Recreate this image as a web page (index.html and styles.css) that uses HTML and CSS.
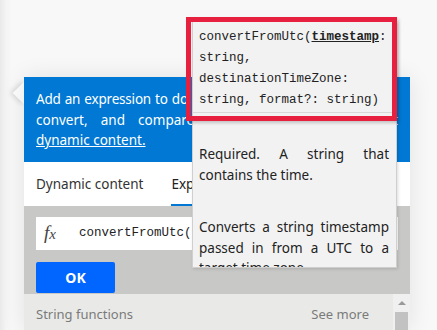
FILE: index.html
```html
<!DOCTYPE html>
<html>
<head>
<meta charset="utf-8">
<link rel="stylesheet" href="styles.css">
</head>
<body>
<div class="stage">
  <div class="pointer"></div>
  <div class="panel">
    <div class="intro">
      <div class="spaced">Add an expression to do basic things like access,</div>
      <div class="jl">convert, and compare values. Learn more about</div>
      <div><a class="link">dynamic content.</a></div>
    </div>
    <div class="tabs">
      <span class="tab">Dynamic content</span>
      <span class="tab active">Expression</span>
    </div>
    <div class="editor">
      <div class="input">
        <span class="fx">f<span class="x">x</span></span>
        <span class="code">convertFromUtc(</span><span class="caret"></span>
      </div>
      <button class="ok">OK</button>
    </div>
    <div class="list">
      <div class="list-head">
        <span class="group">String functions</span>
        <span class="more">See more</span>
      </div>
      <div class="scrollbar">
        <div class="up"></div>
        <div class="thumb"></div>
      </div>
    </div>
  </div>

  <div class="tooltip">
    <div class="sig">convertFromUtc(<b>timestamp</b>:<br>string,<br>destinationTimeZone:<br>string, format?: string)</div>
    <div class="desc">
      <p><span class="jl">Required. A string that</span><span>contains the time.</span></p>
      <p><span class="jl">Converts a string timestamp</span><span class="jl">passed in from a UTC to a</span><span>target time zone.</span></p>
    </div>
  </div>
  <div class="highlight"></div>
</div>
</body>
</html>
```
FILE: styles.css
```css
html, body {
  margin: 0;
  padding: 0;
}
body {
  width: 437px;
  height: 330px;
  overflow: hidden;
  background: linear-gradient(to right, #e9e9e9 0, #f4f4f4 6px, #f8f8f8 12px, #f8f8f8 100%);
  font-family: "Noto Sans", "Open Sans", sans-serif;
}
.stage {
  position: relative;
  height: 330px;
  overflow: hidden;
  padding: 77px 0 0 24px;
  box-sizing: border-box;
}
.pointer {
  position: absolute;
  left: 16px;
  top: 85px;
  width: 16px;
  height: 16px;
  background: #fdfdfd;
  transform: rotate(45deg);
  box-shadow: -2px 2px 5px rgba(0,0,0,0.12);
}
.panel {
  position: relative;
  width: 386px;
  height: 253px;
  display: flex;
  flex-direction: column;
  box-shadow: 0 0 22px rgba(0,0,0,0.09);
}
.intro {
  background: #0078d4;
  color: #fff;
  font-size: 13.5px;
  line-height: 20.5px;
  padding: 12px 12px 11px 12px;
}
.spaced {
  white-space: nowrap;
  letter-spacing: -0.2px;
  word-spacing: 0.8px;
}
.jl {
  display: block;
  text-align: justify;
  text-align-last: justify;
}
.link {
  text-decoration: underline;
}
.tabs {
  background: #fff;
  height: 44px;
  flex: none;
  display: flex;
  align-items: center;
  padding-left: 12px;
  gap: 28px;
  font-size: 13.5px;
  color: #333;
}
.tab {
  line-height: 44px;
  height: 44px;
  box-sizing: border-box;
}
.tab.active {
  color: #222;
  border-bottom: 2px solid #0078d4;
}
.editor {
  background: #c8c9c6;
  padding: 11px 12px 1px 12px;
  display: flex;
  flex-direction: column;
  align-items: flex-start;
  gap: 12px;
}
.input {
  background: #fff;
  width: 362px;
  height: 33px;
  display: flex;
  align-items: center;
  box-sizing: border-box;
  padding-left: 8px;
}
.fx {
  font-family: "Liberation Serif", serif;
  font-style: italic;
  font-size: 19px;
  color: #444;
  width: 35px;
}
.fx .x {
  font-size: 15px;
}
.code {
  font-family: "Liberation Mono", monospace;
  font-size: 12.5px;
  color: #222;
}
.caret {
  display: inline-block;
  width: 1px;
  height: 17px;
  background: #000;
}
.ok {
  width: 79px;
  height: 31px;
  border: 0;
  border-radius: 2px;
  background: #0066ff;
  color: #fff;
  font-family: "Noto Sans", sans-serif;
  font-weight: bold;
  font-size: 14px;
  padding: 0;
}
.list {
  flex: 1;
  background: #e9eae8;
  display: flex;
  position: relative;
}
.list-head {
  flex: 1;
  display: flex;
  justify-content: space-between;
  padding: 11px 24px 0 12px;
  font-size: 13px;
  color: #7a7a7a;
  height: 21px;
}
.scrollbar {
  width: 17px;
  background: #f0f0f0;
  display: flex;
  flex-direction: column;
  align-items: center;
}
.up {
  width: 0;
  height: 0;
  border-left: 4px solid transparent;
  border-right: 4px solid transparent;
  border-bottom: 4px solid #9a9a9a;
  margin-top: 7px;
}
.thumb {
  width: 13px;
  flex: 1;
  margin-top: 7px;
  background: #c2c2c2;
}
.tooltip {
  position: absolute;
  left: 192px;
  top: 22px;
  width: 205px;
  height: 246px;
  box-sizing: border-box;
  background: #f2f2f2;
  border: 1px solid #cfcfcf;
  border-top: 0;
  box-shadow: 1px 1px 3px rgba(0,0,0,0.15);
  overflow: hidden;
  z-index: 2;
}
.sig {
  font-family: "Liberation Mono", monospace;
  font-size: 12.5px;
  line-height: 21px;
  color: #222;
  padding: 5px 6px 1px 6px;
  border-bottom: 1px solid #d8d8d8;
}
.sig b {
  text-decoration: underline;
}
.desc {
  padding: 31px 7px 0 6px;
  font-size: 13.5px;
  line-height: 20.5px;
  color: #222;
}
.desc p {
  margin: 0 0 32px 0;
}
.desc span {
  display: block;
}
.highlight {
  position: absolute;
  left: 186px;
  top: 17px;
  width: 211px;
  height: 104px;
  box-sizing: border-box;
  border: 5px solid #e8203f;
  box-shadow: 2px 2px 3px rgba(0,0,0,0.2);
  z-index: 3;
}
```
